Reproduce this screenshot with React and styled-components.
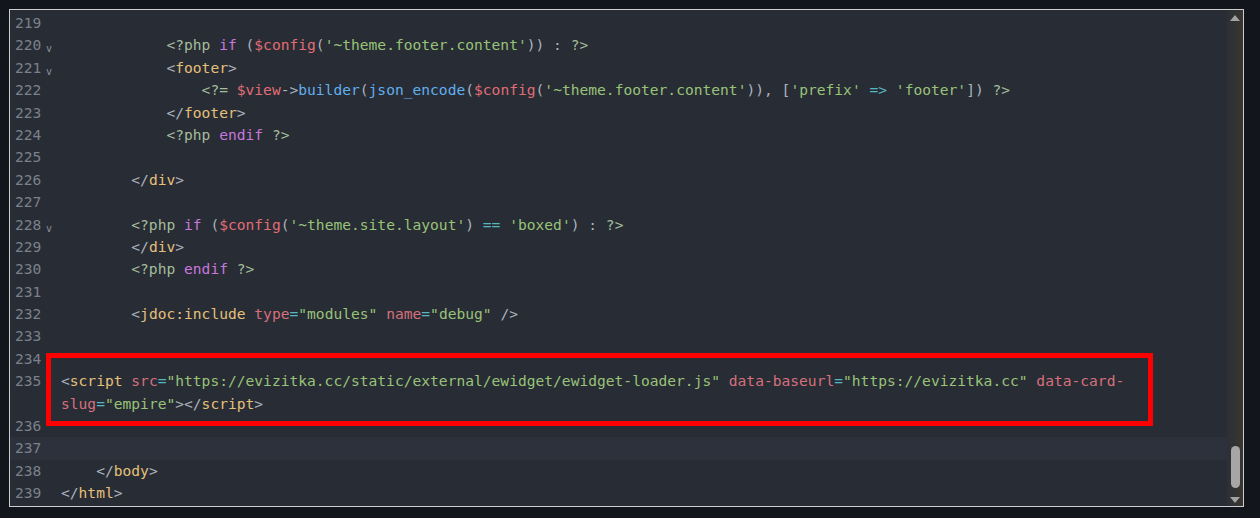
import React from 'react';
import styled, { createGlobalStyle } from 'styled-components';

const GlobalStyle = createGlobalStyle`
  html, body {
    margin: 0;
    padding: 0;
    background: #12151c;
  }
`;

const colors = {
  plain: '#abb2bf',
  php: '#a5bd9c',
  kw: '#c678dd',
  var: '#e06c75',
  str: '#98c379',
  fn: '#61afef',
  tag: '#e5c07b',
  attr: '#d6707c',
  op: '#56b6c2',
  num: '#7b818b',
};

const LINE = 22.4;

const Frame = styled.div`
  padding: 9px 16px 0 9px;
`;

const Editor = styled.div`
  height: 498px;
  box-sizing: border-box;
  border: 1px solid #cdcdcd;
  background: #282c34;
  display: flex;
  overflow: hidden;
`;

const CodeArea = styled.div`
  flex: 1;
  position: relative;
  padding-top: 2px;
  font-family: "DejaVu Sans Mono", "Liberation Mono", monospace;
  font-size: 14.6px;
`;

const Row = styled.div`
  display: flex;
  height: ${LINE}px;
  line-height: ${LINE}px;
  background: ${(p) => (p.$active ? '#2d313b' : 'transparent')};
`;

const Gutter = styled.div`
  width: 51px;
  flex: none;
  display: flex;
  padding-left: 5px;
  box-sizing: border-box;
  color: ${colors.num};
`;

const Num = styled.span`
  width: 31px;
`;

const Fold = styled.span`
  font-size: 10px;
  position: relative;
  top: 4px;
  color: #8a909a;
`;

const Code = styled.pre`
  margin: 0;
  font: inherit;
  white-space: pre;
  color: ${colors.plain};
`;

const Tok = styled.span`
  color: ${(p) => colors[p.$t] || colors.plain};
`;

const Highlight = styled.div`
  position: absolute;
  left: 36px;
  top: 343px;
  width: 1107px;
  height: 73px;
  box-sizing: border-box;
  border: 5px solid #ff0000;
  pointer-events: none;
`;

const Scrollbar = styled.div`
  width: 16px;
  flex: none;
  display: flex;
  flex-direction: column;
  align-items: center;
  background: linear-gradient(to right, #2c2f37, #393630);
  padding: 5px 0 3px;
  box-sizing: border-box;
`;

const Arrow = styled.div`
  width: 0;
  height: 0;
  border-left: 5px solid transparent;
  border-right: 5px solid transparent;
  ${(p) => (p.$down ? 'border-top: 6px solid #a3a3a3;' : 'border-bottom: 6px solid #a3a3a3;')}
`;

const Track = styled.div`
  flex: 1;
  width: 100%;
  display: flex;
  flex-direction: column;
  justify-content: flex-end;
  align-items: center;
  padding-bottom: 9px;
`;

const Thumb = styled.div`
  width: 9px;
  height: 42px;
  border-radius: 5px;
  background: #a6a6a6;
`;

const lines = [
  { n: 219, i: 0, t: [] },
  { n: 220, i: 12, fold: true, t: [['php', '<?php'], ['', ' '], ['kw', 'if'], ['', ' ('], ['var', '$config'], ['', '('], ['str', "'~theme.footer.content'"], ['', ')) : '], ['php', '?>']] },
  { n: 221, i: 12, fold: true, t: [['', '<'], ['tag', 'footer'], ['', '>']] },
  { n: 222, i: 16, t: [['php', '<?='], ['', ' '], ['var', '$view'], ['', '->'], ['fn', 'builder'], ['', '('], ['fn', 'json_encode'], ['', '('], ['var', '$config'], ['', '('], ['str', "'~theme.footer.content'"], ['', ')), ['], ['str', "'prefix'"], ['', ' '], ['op', '=>'], ['', ' '], ['str', "'footer'"], ['', ']) '], ['php', '?>']] },
  { n: 223, i: 12, t: [['', '</'], ['tag', 'footer'], ['', '>']] },
  { n: 224, i: 12, t: [['php', '<?php'], ['', ' '], ['kw', 'endif'], ['', ' '], ['php', '?>']] },
  { n: 225, i: 0, t: [] },
  { n: 226, i: 8, t: [['', '</'], ['tag', 'div'], ['', '>']] },
  { n: 227, i: 0, t: [] },
  { n: 228, i: 8, fold: true, t: [['php', '<?php'], ['', ' '], ['kw', 'if'], ['', ' ('], ['var', '$config'], ['', '('], ['str', "'~theme.site.layout'"], ['', ') '], ['op', '=='], ['', ' '], ['str', "'boxed'"], ['', ') : '], ['php', '?>']] },
  { n: 229, i: 8, t: [['', '</'], ['tag', 'div'], ['', '>']] },
  { n: 230, i: 8, t: [['php', '<?php'], ['', ' '], ['kw', 'endif'], ['', ' '], ['php', '?>']] },
  { n: 231, i: 0, t: [] },
  { n: 232, i: 8, t: [['', '<'], ['tag', 'jdoc:include'], ['', ' '], ['attr', 'type'], ['op', '='], ['str', '"modules"'], ['', ' '], ['attr', 'name'], ['op', '='], ['str', '"debug"'], ['', ' />']] },
  { n: 233, i: 0, t: [] },
  { n: 234, i: 0, t: [] },
  { n: 235, i: 0, t: [['', '<'], ['tag', 'script'], ['', ' '], ['attr', 'src'], ['op', '='], ['str', '"https://evizitka.cc/static/external/ewidget/ewidget-loader.js"'], ['', ' '], ['attr', 'data-baseurl'], ['op', '='], ['str', '"https://evizitka.cc"'], ['', ' '], ['attr', 'data-card-']] },
  { n: null, i: 0, t: [['attr', 'slug'], ['op', '='], ['str', '"empire"'], ['', '></'], ['tag', 'script'], ['', '>']] },
  { n: 236, i: 0, t: [] },
  { n: 237, i: 0, active: true, t: [] },
  { n: 238, i: 4, t: [['', '</'], ['tag', 'body'], ['', '>']] },
  { n: 239, i: 0, t: [['', '</'], ['tag', 'html'], ['', '>']] },
];

const App = () => {
  return (
    <>
      <GlobalStyle />
      <Frame>
        <Editor>
          <CodeArea>
            {lines.map((line, idx) => (
              <Row key={idx} $active={line.active}>
                <Gutter>
                  <Num>{line.n ?? ''}</Num>
                  {line.fold && <Fold>v</Fold>}
                </Gutter>
                <Code>
                  {' '.repeat(line.i)}
                  {line.t.map(([type, text], k) => (
                    <Tok key={k} $t={type}>{text}</Tok>
                  ))}
                </Code>
              </Row>
            ))}
            <Highlight />
          </CodeArea>
          <Scrollbar>
            <Arrow />
            <Track>
              <Thumb />
            </Track>
            <Arrow $down />
          </Scrollbar>
        </Editor>
      </Frame>
    </>
  );
};

export default App;
